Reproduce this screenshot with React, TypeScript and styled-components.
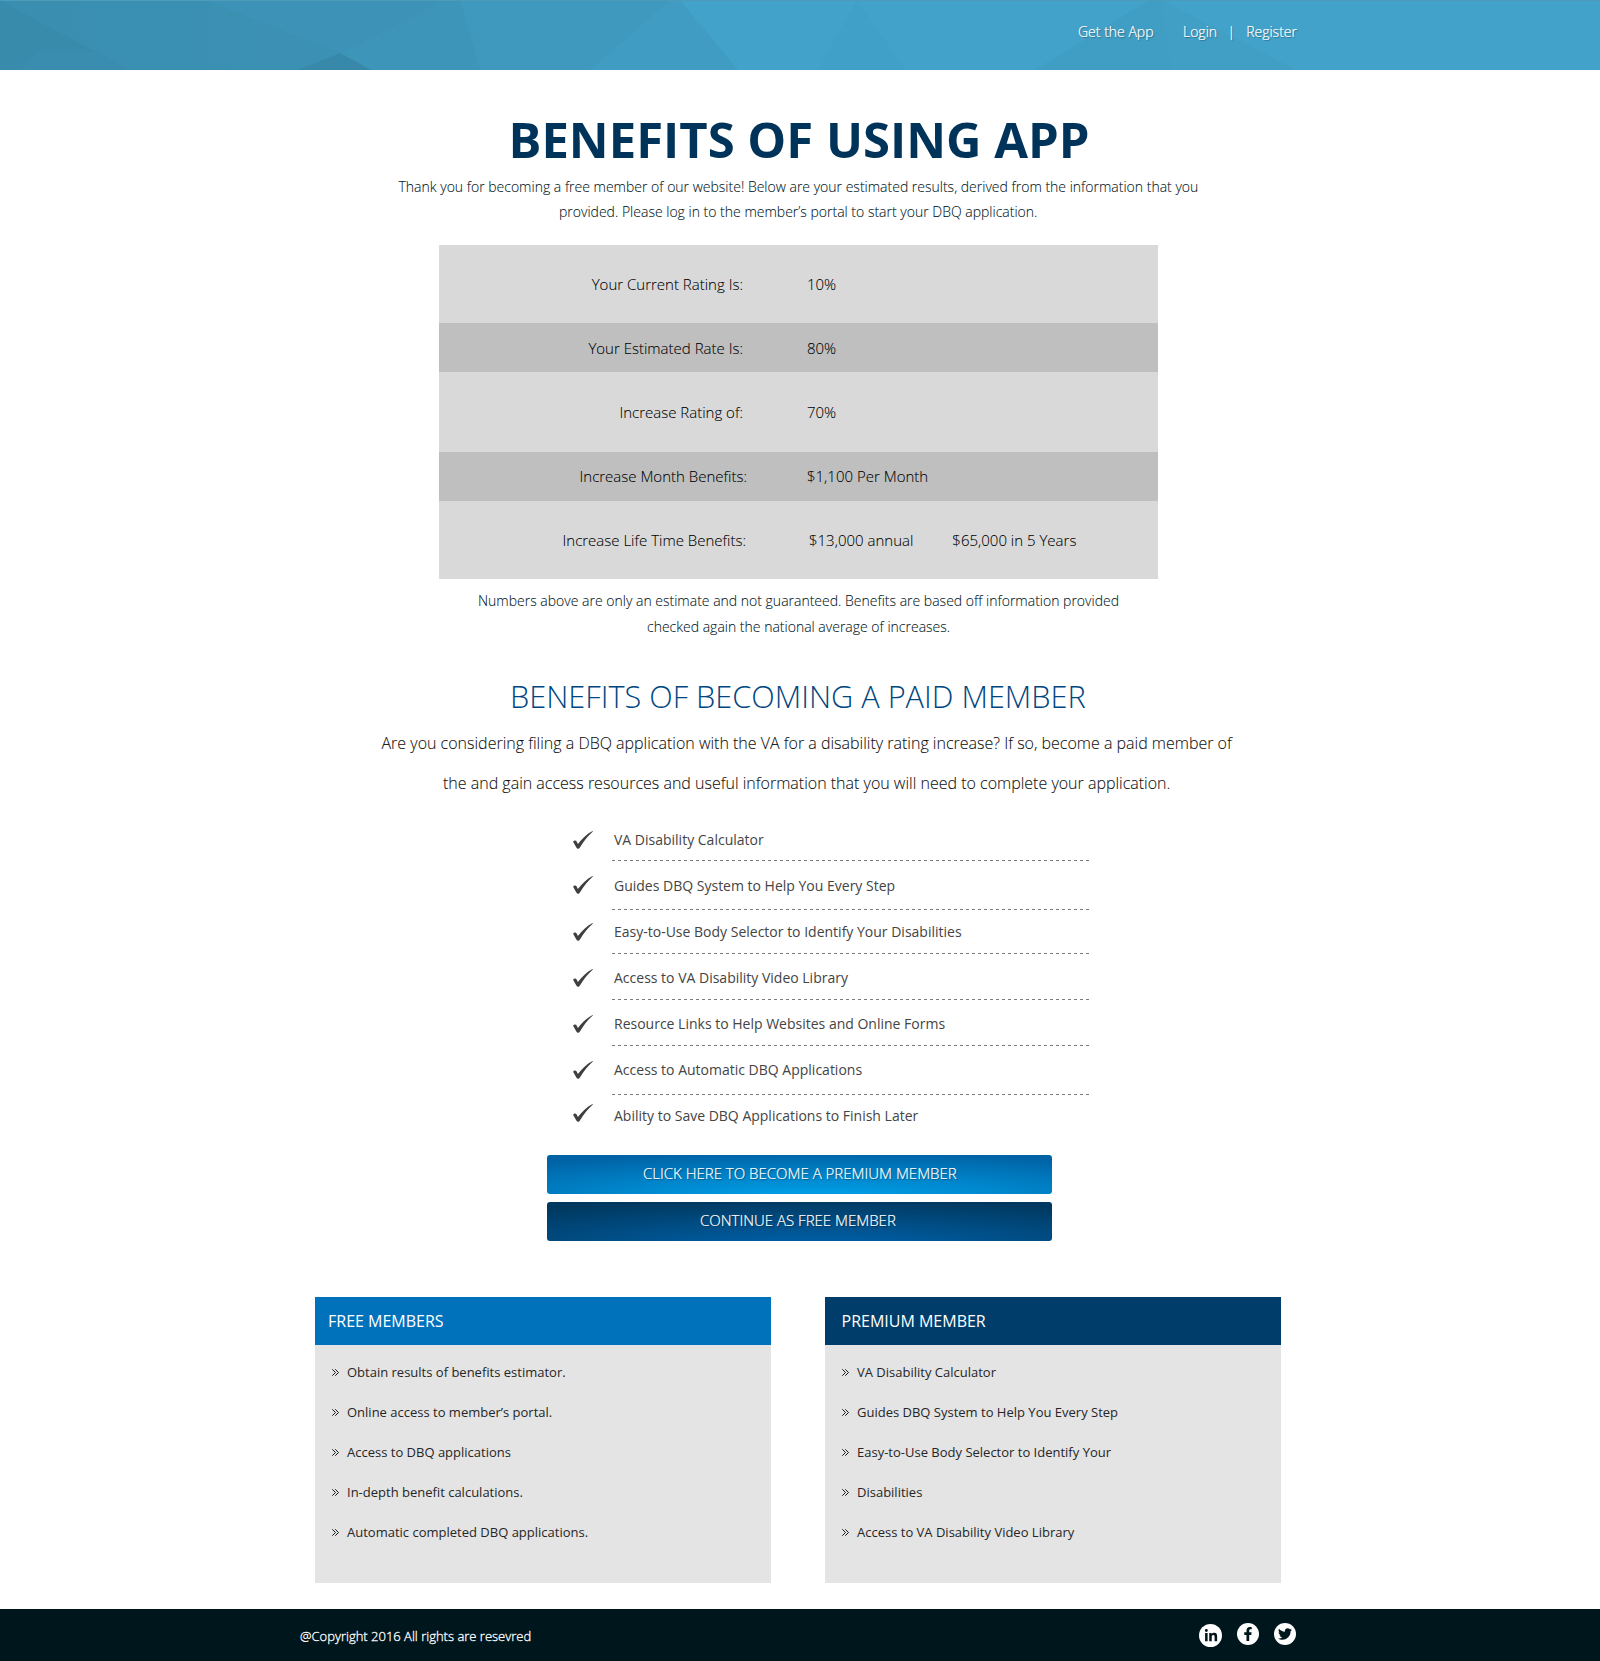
import React from 'react';
import styled, { createGlobalStyle } from 'styled-components';
import { FaFacebookF, FaLinkedinIn, FaTwitter } from 'react-icons/fa';

const GlobalStyle = createGlobalStyle`
  * { box-sizing: border-box; }
  body {
    margin: 0;
    background: #fff;
    font-family: 'Open Sans', 'Noto Sans', sans-serif;
  }
  h1, h2, h3, p, ul, dl, dt, dd { margin: 0; padding: 0; }
  ul { list-style: none; }
`;

const Page = styled.div`
  width: 1600px;
  height: 1661px;
  display: flex;
  flex-direction: column;
  overflow: hidden;
`;

const Header = styled.header`
  position: relative;
  height: 70px;
  flex: none;
  background: #42a2c9;
`;

const HeaderArt = styled.svg`
  position: absolute;
  inset: 0;
  display: block;
`;

const Nav = styled.nav`
  position: relative;
  display: flex;
  padding-left: 1078px;
`;

const NavLink = styled.a<{ $gap?: number }>`
  margin-right: ${(p) => p.$gap ?? 0}px;
  font-size: 14px;
  font-weight: 300;
  line-height: 63px;
  white-space: nowrap;
  color: #fff;
  -webkit-text-stroke: 0.2px #fff;
  text-shadow: 1px 1px 1px rgba(0, 0, 0, 0.35);
`;

const Main = styled.main`
  flex: 1;
  display: flex;
  flex-direction: column;
  padding-top: 40px;
`;

const Title = styled.h1`
  padding-left: 508.5px;
  font-size: 49px;
  font-weight: 700;
  line-height: 59px;
  white-space: nowrap;
  color: #003359;
`;

const Lines = styled.p<{ $top: number; $size: number; $line: number; $color: string }>`
  display: flex;
  flex-direction: column;
  margin-top: ${(p) => p.$top}px;
  font-size: ${(p) => p.$size}px;
  font-weight: 300;
  line-height: ${(p) => p.$line}px;
  color: ${(p) => p.$color};
  -webkit-text-stroke: 0.08px ${(p) => p.$color};
`;

const Line = styled.span<{ $left: number }>`
  padding-left: ${(p) => p.$left}px;
  white-space: nowrap;
`;

const Results = styled.dl`
  width: 719px;
  margin: 21px 0 0 439px;
`;

const ResultRow = styled.div<{ $height: number; $dark?: boolean; $lift?: number }>`
  display: flex;
  align-items: center;
  height: ${(p) => p.$height}px;
  padding-bottom: ${(p) => p.$lift ?? 0}px;
  background: ${(p) => (p.$dark ? '#bfbfbf' : '#d9d9d9')};
  font-size: 15px;
  font-weight: 300;
  line-height: 20px;
  white-space: nowrap;
  color: #000;
  -webkit-text-stroke: 0.08px #000;
`;

const ResultLabel = styled.dt<{ $width: number }>`
  width: ${(p) => p.$width}px;
  text-align: right;
`;

const ResultValue = styled.dd<{ $gap: number }>`
  && { margin-left: ${(p) => p.$gap}px; }
`;

const Subtitle = styled.h2`
  margin-top: 36px;
  padding-left: 510px;
  font-size: 30.7px;
  font-weight: 300;
  line-height: 40px;
  white-space: nowrap;
  color: #00467f;
`;

const Features = styled.ul`
  width: 516px;
  height: 338px;
  margin: 14px 0 0 573px;
`;

const Feature = styled.li<{ $height: number }>`
  display: flex;
  height: ${(p) => p.$height}px;
`;

const Check = styled.svg<{ $top: number }>`
  flex: none;
  width: 20px;
  height: 18px;
  margin-top: ${(p) => p.$top}px;
  margin-right: 19px;
`;

const FeatureText = styled.span<{ $top: number; $last?: boolean }>`
  flex: 1;
  padding: ${(p) => p.$top}px 0 0 2px;
  font-size: 14px;
  line-height: 20px;
  color: #444;
  background: ${(p) =>
    p.$last
      ? 'none'
      : 'repeating-linear-gradient(90deg, #7a7a7a 0 3px, transparent 3px 6px) left bottom / 100% 1px no-repeat'};
`;

const Actions = styled.div`
  display: flex;
  flex-direction: column;
  gap: 8px;
  width: 505px;
  margin-left: 547px;
`;

const Action = styled.button<{ $from: string; $to: string; $left: number }>`
  height: 39px;
  padding: 0 0 3px ${(p) => p.$left}px;
  border: 0;
  border-radius: 3px;
  background: radial-gradient(ellipse 86% 118% at 53% 112%, ${(p) => p.$to} 16%, ${(p) => p.$from});
  font: 300 15px/36px 'Open Sans', 'Noto Sans', sans-serif;
  text-align: left;
  white-space: nowrap;
  color: #fff;
  -webkit-text-stroke: 0.2px #fff;
  text-shadow: 1px 1px 1px rgba(0, 0, 0, 0.35);
`;

const Plans = styled.section`
  display: flex;
  gap: 54px;
  margin: 56px 0 0 315px;
`;

const Plan = styled.article`
  width: 456px;
  height: 286px;
  background: #e4e4e4;
`;

const PlanTitle = styled.h3<{ $color: string; $left: number }>`
  height: 48px;
  padding-left: ${(p) => p.$left}px;
  background: ${(p) => p.$color};
  font-size: 16px;
  font-weight: 400;
  line-height: 48px;
  white-space: nowrap;
  color: #fff;
`;

const PlanList = styled.ul`
  && { padding: 7px 0 0 17px; }
`;

const PlanItem = styled.li`
  display: flex;
  align-items: center;
  gap: 8px;
  font-size: 13px;
  line-height: 40px;
  white-space: nowrap;
  color: #262626;
`;

const Bullet = styled.svg`
  width: 7px;
  height: 7px;
`;

const Footer = styled.footer`
  display: flex;
  flex: none;
  height: 52px;
  padding-left: 300px;
  background: #00161d;
`;

const Copyright = styled.p`
  width: 899px;
  font-size: 13px;
  font-weight: 300;
  line-height: 54px;
  white-space: nowrap;
  color: #fff;
  -webkit-text-stroke: 0.3px #fff;
`;

const Social = styled.a<{ $size: number; $top: number; $gap: number }>`
  display: flex;
  align-items: center;
  justify-content: center;
  width: ${(p) => p.$size}px;
  height: ${(p) => p.$size}px;
  margin: ${(p) => p.$top}px ${(p) => p.$gap}px 0 0;
  border-radius: 50%;
  background: #fff;
  color: #00161d;
`;

const features = [
  { text: 'VA Disability Calculator', height: 44, top: 13, check: 14 },
  { text: 'Guides DBQ System to Help You Every Step', height: 49, top: 15, check: 15 },
  { text: 'Easy-to-Use Body Selector to Identify Your Disabilities', height: 44, top: 12, check: 13 },
  { text: 'Access to VA Disability Video Library', height: 46, top: 14, check: 15 },
  { text: 'Resource Links to Help Websites and Online Forms', height: 46, top: 14, check: 15 },
  { text: 'Access to Automatic DBQ Applications', height: 49, top: 14, check: 15 },
  { text: 'Ability to Save DBQ Applications to Finish Later', height: 40, top: 11, check: 9 },
];

const plans = [
  {
    title: 'FREE MEMBERS',
    color: '#0072bc',
    left: 13,
    items: [
      'Obtain results of benefits estimator.',
      'Online access to member’s portal.',
      'Access to DBQ applications',
      'In-depth benefit calculations.',
      'Automatic completed DBQ applications.',
    ],
  },
  {
    title: 'PREMIUM MEMBER',
    color: '#003d6b',
    left: 16.5,
    items: [
      'VA Disability Calculator',
      'Guides DBQ System to Help You Every Step',
      'Easy-to-Use Body Selector to Identify Your',
      'Disabilities',
      'Access to VA Disability Video Library',
    ],
  },
];

const HeaderPattern = () => (
  <HeaderArt width="1600" height="70" viewBox="0 0 1600 70" aria-hidden="true">
    <defs>
      <linearGradient id="sky" x1="0" x2="1">
        <stop offset="0" stopColor="#3a8fb0" />
        <stop offset="0.2" stopColor="#3b91b3" />
        <stop offset="0.45" stopColor="#409dc3" />
        <stop offset="0.5" stopColor="#42a2c9" />
        <stop offset="1" stopColor="#42a2c9" />
      </linearGradient>
    </defs>
    <rect width="1600" height="70" fill="url(#sky)" />
    <polygon points="0,0 8,5 130,70 0,70" fill="#398bac" />
    <polygon points="20,70 36,52 95,52 130,70" fill="#3a8daf" />
    <polygon points="80,0 205,0 198,70 130,70 98,52" fill="#3a90b3" />
    <polygon points="205,0 445,0 340,53" fill="#3c92b7" />
    <polygon points="445,0 460,0 480,70 371,70 340,53" fill="#3d96ba" />
    <polygon points="340,53 371,70 298,70" fill="#3888a9" />
    <polygon points="460,0 680,0 738,70 480,70" fill="#3f99bf" />
    <polygon points="670,0 682,0 738,70 590,70" fill="#409cc2" />
    <polygon points="680,0 1600,0 1600,70 738,70" fill="#42a2c9" />
    <polygon points="857,0 818,70 905,70" fill="#41a0c7" />
    <polygon points="1150,0 1162,0 1172,70 1035,70" fill="#409dc3" />
    <polygon points="1162,0 1296,70 1172,70" fill="#419fc6" />
    <rect width="1600" height="1" fill="#4b9bb9" />
  </HeaderArt>
);

const Tick = ({ top }: { top: number }) => (
  <Check $top={top} viewBox="0 0 20 18" aria-hidden="true">
    <path
      d="M0.1 10.8 C1 9.2 2.8 9 3.5 10.3 L4.9 13 C9 7.6 13.6 3.2 19.6 0 L19.9 0.4 C15 4.6 10.6 10.4 6.9 16.4 C6 18 4.3 18.2 3.5 16.7 Z"
      fill="#3f3f3f"
    />
  </Check>
);

const App = () => (
  <>
    <GlobalStyle />
    <Page>
      <Header>
        <HeaderPattern />
        <Nav>
          <NavLink $gap={29.5}>Get the App</NavLink>
          <NavLink $gap={10.5}>Login</NavLink>
          <NavLink $gap={11}>|</NavLink>
          <NavLink>Register</NavLink>
        </Nav>
      </Header>
      <Main>
        <Title>BENEFITS OF USING APP</Title>
        <Lines $top={5} $size={14} $line={25} $color="#00161d">
          <Line $left={398.5}>
            Thank you for becoming a free member of our website! Below are your estimated results, derived from the
            information that you
          </Line>
          <Line $left={559}>provided. Please log in to the member’s portal to start your DBQ application.</Line>
        </Lines>
        <Results>
          <ResultRow $height={78}>
            <ResultLabel $width={304}>Your Current Rating Is:</ResultLabel>
            <ResultValue $gap={64}>10%</ResultValue>
          </ResultRow>
          <ResultRow $height={49} $dark>
            <ResultLabel $width={304}>Your Estimated Rate Is:</ResultLabel>
            <ResultValue $gap={64}>80%</ResultValue>
          </ResultRow>
          <ResultRow $height={80}>
            <ResultLabel $width={304}>Increase Rating of:</ResultLabel>
            <ResultValue $gap={64}>70%</ResultValue>
          </ResultRow>
          <ResultRow $height={49} $dark $lift={2}>
            <ResultLabel $width={308}>Increase Month Benefits:</ResultLabel>
            <ResultValue $gap={60}>$1,100 Per Month</ResultValue>
          </ResultRow>
          <ResultRow $height={78}>
            <ResultLabel $width={307}>Increase Life Time Benefits:</ResultLabel>
            <ResultValue $gap={63}>$13,000 annual</ResultValue>
            <ResultValue $gap={39}>$65,000 in 5 Years</ResultValue>
          </ResultRow>
        </Results>
        <Lines $top={9} $size={14} $line={26} $color="#00161d">
          <Line $left={478}>
            Numbers above are only an estimate and not guaranteed. Benefits are based off information provided
          </Line>
          <Line $left={647}>checked again the national average of increases.</Line>
        </Lines>
        <Subtitle>BENEFITS OF BECOMING A PAID MEMBER</Subtitle>
        <Lines $top={7} $size={16} $line={40} $color="#0d0d0d">
          <Line $left={381.5}>
            Are you considering filing a DBQ application with the VA for a disability rating increase? If so, become a
            paid member of
          </Line>
          <Line $left={443}>
            the and gain access resources and useful information that you will need to complete your application.
          </Line>
        </Lines>
        <Features>
          {features.map((f, i) => (
            <Feature key={f.text} $height={f.height}>
              <Tick top={f.check} />
              <FeatureText $top={f.top} $last={i === features.length - 1}>
                {f.text}
              </FeatureText>
            </Feature>
          ))}
        </Features>
        <Actions>
          <Action $from="#0063a6" $to="#009be2" $left={96}>
            CLICK HERE TO BECOME A PREMIUM MEMBER
          </Action>
          <Action $from="#003960" $to="#005ca0" $left={153}>
            CONTINUE AS FREE MEMBER
          </Action>
        </Actions>
        <Plans>
          {plans.map((plan) => (
            <Plan key={plan.title}>
              <PlanTitle $color={plan.color} $left={plan.left}>
                {plan.title}
              </PlanTitle>
              <PlanList>
                {plan.items.map((item) => (
                  <PlanItem key={item}>
                    <Bullet viewBox="0 0 7 7" aria-hidden="true">
                      <path
                        d="M0.3 0.3 L3.5 3.5 L0.3 6.7 M3.3 0.3 L6.5 3.5 L3.3 6.7"
                        fill="none"
                        stroke="#000"
                        strokeWidth="0.9"
                      />
                    </Bullet>
                    {item}
                  </PlanItem>
                ))}
              </PlanList>
            </Plan>
          ))}
        </Plans>
      </Main>
      <Footer>
        <Copyright>@Copyright 2016 All rights are resevred</Copyright>
        <Social $size={23} $top={15} $gap={15}>
          <FaLinkedinIn size={14} />
        </Social>
        <Social $size={22} $top={14} $gap={15}>
          <FaFacebookF size={14} />
        </Social>
        <Social $size={22} $top={14} $gap={0}>
          <FaTwitter size={14} />
        </Social>
      </Footer>
    </Page>
  </>
);

export default App;
